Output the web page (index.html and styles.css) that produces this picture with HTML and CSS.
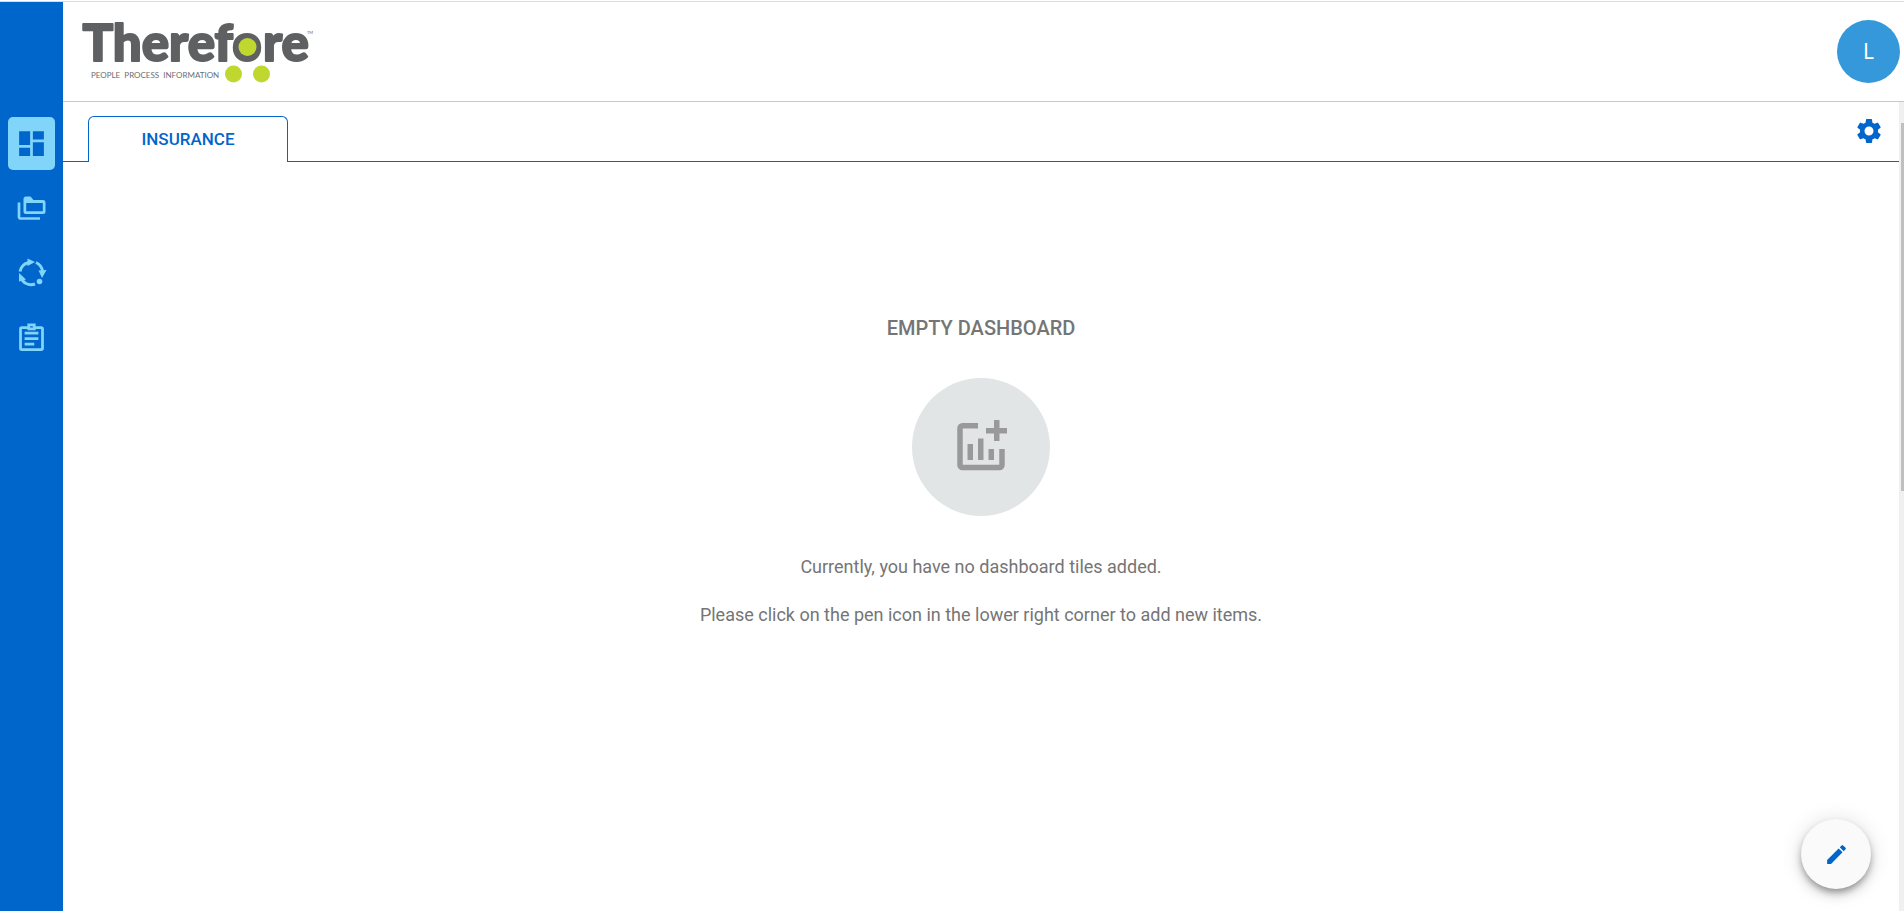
FILE: index.html
```html
<!DOCTYPE html>
<html lang="en">
<head>
<meta charset="utf-8">
<title>Therefore Dashboard</title>
<link rel="stylesheet" href="styles.css">
</head>
<body>
<div class="app">
  <nav class="sidebar" aria-label="Main">
    <button class="nav-item nav-item-active" aria-label="Dashboard">
      <svg class="nav-icon" viewBox="0 0 24 24"><path fill="currentColor" d="M3 13h8V3H3v10zm0 8h8v-6H3v6zm10 0h8V11h-8v10zm0-18v6h8V3h-8z"/></svg>
    </button>
    <button class="nav-item" aria-label="Documents">
      <svg class="nav-icon" viewBox="0 0 33 33"><path fill="none" stroke="currentColor" stroke-width="2.700" stroke-linejoin="round" d="M4 10.500V25a1.500 1.500 0 0 0 1.500 1.500H25"/><path fill="currentColor" fill-rule="evenodd" d="M11 4.500h4.500l3 3.500H28a2.500 2.500 0 0 1 2.500 2.500v9A2.500 2.500 0 0 1 28 22H11a2.500 2.500 0 0 1-2.500-2.500V7A2.500 2.500 0 0 1 11 4.500zm.2 6.500v8.300h16.600V11z"/></svg>
    </button>
    <button class="nav-item" aria-label="Workflows">
      <svg class="nav-icon" viewBox="0 0 33 33"><g fill="none" stroke="currentColor" stroke-width="3"><path d="M5 14.500a11.500 11.500 0 0 1 9-9"/><path d="M21 5.500a11.500 11.500 0 0 1 6.500 8.500"/><path d="M20 27a11.500 11.500 0 0 1-13-4"/></g><g fill="currentColor"><path d="M12.500 1.500l7.500 3.500-7.500 4z"/><path d="M23.500 13.500l8-.5-4.500 8z"/><path d="M4 16l7 6.500-7 2z"/><circle cx="24.500" cy="24.500" r="2.800"/></g></svg>
    </button>
    <button class="nav-item" aria-label="Tasks">
      <svg class="nav-icon" viewBox="0 0 24 24"><path fill="currentColor" d="M7 15h7v2H7zm0-4h10v2H7zm0-4h10v2H7zM19 3h-4V1H9v2H5a2 2 0 0 0-2 2v14a2 2 0 0 0 2 2h14a2 2 0 0 0 2-2V5a2 2 0 0 0-2-2zm-8 0h2v1h-2zm8 16H5V5h4v1h6V5h4z"/></svg>
    </button>
  </nav>
  <div class="main">
    <header class="header">
      <svg class="logo" viewBox="0 -12 236 92" role="img" aria-label="Therefore, People Process Information">
        <g class="logo-name"><text x="152" y="44" text-anchor="end">Theref</text><text x="166" y="44" text-anchor="middle">o</text><text x="182" y="44">re</text></g>
        <text class="logo-tag" x="10" y="61">PEOPLE&#160; PROCESS&#160; INFORMATION</text>
        <text class="logo-tm" x="226" y="17">TM</text>
        <g class="logo-dots"><circle cx="166.500" cy="30" r="9"/><circle cx="152.500" cy="57" r="8.500"/><circle cx="180.500" cy="57" r="8.500"/></g>
      </svg>
      <button class="avatar" aria-label="Account">L</button>
    </header>
    <div class="body">
      <div class="content">
        <div class="tabs">
          <button class="tab">INSURANCE</button>
          <button class="settings" aria-label="Settings"><svg class="settings-icon" viewBox="0 0 24 24"><path fill="currentColor" d="M19.140 12.940c.04-.3.060-.61.060-.94 0-.32-.02-.64-.07-.94l2.030-1.580a.49.490 0 0 0 .12-.61l-1.920-3.320a.488.488 0 0 0-.59-.22l-2.390.96c-.5-.38-1.030-.7-1.620-.94l-.36-2.540a.484.484 0 0 0-.48-.41h-3.840c-.24 0-.43.170-.47.410l-.36 2.540c-.59.240-1.130.570-1.620.940l-2.390-.96c-.22-.08-.47 0-.59.220L2.740 8.870c-.12.210-.08.470.12.610l2.030 1.580c-.05.300-.09.630-.09.940s.02.640.070.940l-2.030 1.580a.49.490 0 0 0-.12.610l1.920 3.320c.12.220.370.290.590.220l2.390-.96c.5.380 1.030.700 1.620.940l.36 2.540c.05.240.240.410.480.410h3.840c.24 0 .44-.17.470-.41l.36-2.540c.59-.24 1.130-.56 1.620-.94l2.390.96c.22.080.470 0 .59-.22l1.920-3.320c.12-.22.070-.47-.12-.61zM12 15.600A3.600 3.600 0 1 1 12 8.400a3.600 3.600 0 0 1 0 7.200z"/></svg></button>
        </div>
        <main class="empty">
          <h1 class="empty-title">EMPTY DASHBOARD</h1>
          <div class="empty-badge"><svg class="empty-icon" viewBox="0 0 50 54"><path fill="none" stroke="#999" stroke-width="5.500" d="M22 5.800H6.500A2.500 2.500 0 0 0 4 8.300V45A2.500 2.500 0 0 0 6.500 47.500h37A2.500 2.500 0 0 0 46 45V29"/><path fill="#999" d="M11.500 24H17v16h-5.500zM22 18.500h5.500V40H22zM32.500 29H38v11h-5.500zM38 0h5.500v8H51v5.500h-7.500V21H38v-7.500h-8V8h8z"/></svg></div>
          <p class="empty-text">Currently, you have no dashboard tiles added.</p>
          <p class="empty-text">Please click on the pen icon in the lower right corner to add new items.</p>
        </main>
      </div>
      <div class="scrollbar"><div class="scroll-thumb"></div></div>
    </div>
  </div>
  <button class="fab" aria-label="Edit dashboard"><svg class="fab-icon" viewBox="0 0 24 24"><path fill="currentColor" d="M3 17.250V21h3.750L17.810 9.940l-3.750-3.750zM20.710 7.040a1 1 0 0 0 0-1.410l-2.340-2.340a1 1 0 0 0-1.410 0l-1.830 1.830 3.750 3.750z"/></svg></button>
</div>
</body>
</html>
```
FILE: styles.css
```css
* { box-sizing: border-box; }
body { margin: 0; background: #fff; font-family: "Fira Sans Condensed", "Fira Sans", "Noto Sans", sans-serif; }
button { border: 0; padding: 0; background: none; font: inherit; cursor: pointer; }
svg { display: block; }
.app { position: relative; display: flex; height: 100vh; padding-top: 1px; }
.app::before { content: ""; position: absolute; top: 1px; left: 0; right: 0; height: 1px; background: #dadce0; }
.sidebar { width: 63px; flex: none; margin-top: 1px; padding-top: 115px; background: #0066cc; display: flex; flex-direction: column; align-items: center; gap: 12px; }
.nav-item { width: 47px; height: 53px; border-radius: 5px; display: grid; place-items: center; color: #81d4fa; }
.nav-item-active { background: #81d4fa; color: #0066cc; }
.nav-icon { width: 33px; height: 33px; }
.main { flex: 1; min-width: 0; display: flex; flex-direction: column; }
.header { height: 101px; flex: none; border-bottom: 1px solid #c8c8c8; display: flex; align-items: center; justify-content: space-between; padding: 0 4px 0 18px; }
.logo { width: 236px; height: 92px; }
.logo-name { font-family: Lato, sans-serif; font-weight: 900; font-size: 51px; fill: #5f6062; stroke: #5f6062; stroke-width: 2; stroke-linejoin: round; }
.logo-tag { font-family: Lato, sans-serif; font-size: 8px; fill: #6d6e70; }
.logo-tm { font-family: Lato, sans-serif; font-size: 4px; fill: #5f6062; }
.logo-dots { fill: #c0d72f; }
.avatar { width: 63px; height: 63px; border-radius: 50%; background: #3498db; color: #fff; font-family: "Noto Sans", sans-serif; font-size: 21px; }
.body { flex: 1; min-height: 0; display: flex; }
.content { flex: 1; min-width: 0; }
.tabs { height: 60px; padding: 14px 15px 0 25px; display: flex; justify-content: space-between; align-items: flex-start; border-bottom: 1px solid #0066cc; }
.tab { width: 200px; height: 46px; padding-bottom: 2px; border: 1px solid #0066cc; border-bottom: 0; border-radius: 6px 6px 0 0; background: #fff; color: #0066cc; font-family: Roboto, sans-serif; font-size: 17px; font-weight: 500; }
.settings { color: #0066cc; }
.settings-icon { width: 30px; height: 30px; }
.empty { padding-top: 152px; display: flex; flex-direction: column; align-items: center; color: #757575; font-family: Roboto, sans-serif; }
.empty-title { margin: 0 0 36px; font-size: 20px; line-height: 28px; font-weight: 500; }
.empty-badge { width: 138px; height: 138px; border-radius: 50%; background: #e1e5e6; display: grid; place-items: center; margin-bottom: 27px; }
.empty-icon { width: 50px; height: 54px; overflow: visible; }
.empty-text { margin: 0; font-size: 18px; line-height: 48px; }
.scrollbar { width: 5px; padding: 21px 0 0 2px; background: #f0f0f0; }
.scroll-thumb { height: 368px; max-height: 100%; background: #c0c0c0; }
.fab { position: absolute; right: 33px; bottom: 22px; width: 70px; height: 70px; border-radius: 50%; background: #fafafa; color: #0066cc; display: grid; place-items: center; box-shadow: 0 4px 6px -1px rgba(0,0,0,.3), 0 6px 12px rgba(0,0,0,.14), 0 1px 22px rgba(0,0,0,.12); }
.fab-icon { width: 25px; height: 25px; }
```
